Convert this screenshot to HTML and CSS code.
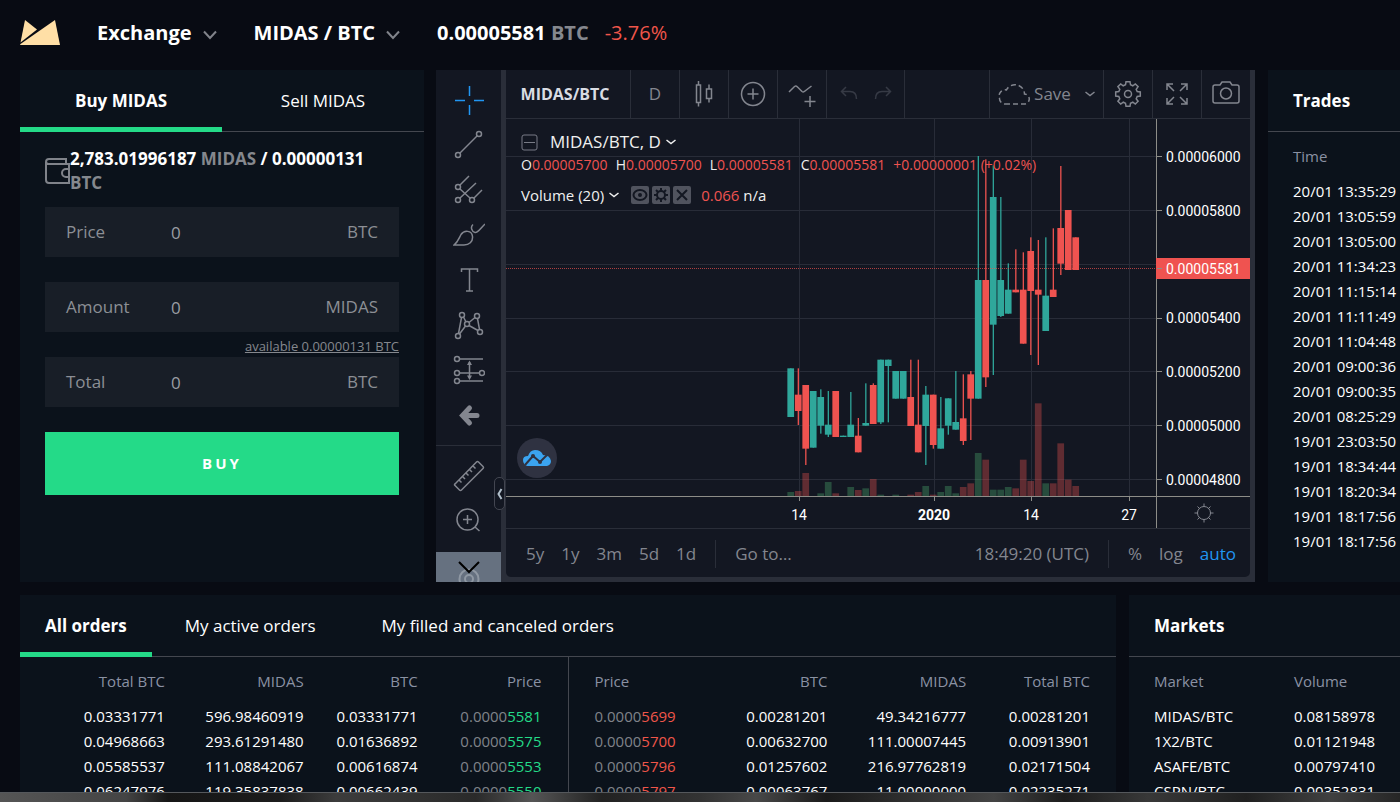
FILE: index.html
```html
<!DOCTYPE html>
<html lang="en">
<head>
    <meta charset="UTF-8">
    <meta name="viewport" content="width=device-width, initial-scale=1.0">
    <link rel="stylesheet" href="styles.css">
    <title>MIDAS / BTC Exchange</title>
</head>
<body>

    <header class="topbar">
        <svg class="logo" viewBox="0 0 40 26" width="40" height="26">
            <path d="M5 0 L17 9.5 L0.5 22.5 Z"/>
            <path d="M35 0 L40 25 H0 L0.5 24 Z"/>
        </svg>
        <button class="nav-button">Exchange
            <svg viewBox="0 0 14 10" width="14" height="10"><path d="M1 1.5 L7 8 L13 1.5"/></svg>
        </button>
        <button class="nav-button">MIDAS / BTC
            <svg viewBox="0 0 14 10" width="14" height="10"><path d="M1 1.5 L7 8 L13 1.5"/></svg>
        </button>
        <div class="ticker"><b>0.00005581 <span class="muted">BTC</span></b><span class="change">-3.76%</span></div>
    </header>

    <main class="top-row">
        <section class="panel trade-form">
            <div class="tabs form-tabs">
                <button class="tab active">Buy MIDAS</button>
                <button class="tab">Sell MIDAS</button>
            </div>
            <form class="form-body">
                <div class="wallet">
                    <svg viewBox="0 0 25 26" width="25" height="26">
                        <path d="M21 6 V1 H4 A3 3 0 0 0 1 4 V22 A3 3 0 0 0 4 25 H24 V6 H4 A3 3 0 0 1 1 4 M24 11 H21 A3.5 3.5 0 0 0 21 19 H24"/>
                    </svg>
                    <p>2,783.01996187 <span class="muted">MIDAS</span> / 0.00000131 <span class="muted">BTC</span></p>
                </div>
                <div class="field">
                    <label for="price">Price</label>
                    <input type="text" id="price" value="0">
                    <span>BTC</span>
                </div>
                <div class="field">
                    <label for="amount">Amount</label>
                    <input type="text" id="amount" value="0">
                    <span>MIDAS</span>
                </div>
                <a class="available" href="#">available 0.00000131 BTC</a>
                <div class="field">
                    <label for="total">Total</label>
                    <input type="text" id="total" value="0">
                    <span>BTC</span>
                </div>
                <button type="button" class="buy">BUY</button>
            </form>
        </section>

        <section class="chart">
            <div class="tools">
                <button class="tool selected" aria-label="Cross">
                    <svg viewBox="0 0 32 32"><path d="M2 16.5H12M21 16.5H31M16.5 2V12M16.5 21V31"/></svg>
                </button>
                <button class="tool" aria-label="Trend line">
                    <svg viewBox="0 0 32 32"><circle cx="5" cy="26" r="2.5"/><circle cx="26" cy="5" r="2.5"/><path d="M7 24L24 7"/></svg>
                </button>
                <button class="tool" aria-label="Pitchfork">
                    <svg viewBox="0 0 32 32"><circle cx="5" cy="13" r="2.5"/><circle cx="5" cy="26" r="2.5"/><circle cx="19" cy="26" r="2.5"/><path d="M7 11L16 2M7 15L17 24M7 24L23 9M21 24L29 16"/></svg>
                </button>
                <button class="tool" aria-label="Brush">
                    <svg viewBox="0 0 32 32"><path d="M1 26C5 23 6 19 8 15.500C11 11 19 11 19.500 17.500C20 23 16 26 11 26ZM20 5.500C17 8 19 13 22 13.500C25 14 26 11 32 5"/></svg>
                </button>
                <button class="tool" aria-label="Text">
                    <svg viewBox="0 0 32 32"><path d="M8.500 8V5H24.500V8M16.500 5V27M13 27H20"/></svg>
                </button>
                <button class="tool" aria-label="Pattern">
                    <svg viewBox="0 0 32 32"><circle cx="9" cy="6" r="2.500"/><circle cx="24" cy="7" r="2.500"/><circle cx="14" cy="15" r="2.500"/><circle cx="5" cy="27" r="2.500"/><circle cx="27" cy="23" r="2.500"/><path d="M8.500 8.500L5.500 24.500M10.500 8L13 13M16 13.500L22 8.500M24.500 9.500L26.500 20.500M12.500 17L6.500 25M16 16.500L25 21.500"/></svg>
                </button>
                <button class="tool" aria-label="Position">
                    <svg viewBox="0 0 32 32"><circle cx="4" cy="5" r="2.500"/><circle cx="4" cy="19" r="2.500"/><circle cx="29" cy="19" r="2.500"/><circle cx="4" cy="27" r="2.500"/><path d="M6.500 5H30M6.500 19H26.500M6.500 27H30M16.500 8V24"/><path class="solid" d="M16.500 6.500L19 11H14ZM16.500 26L19 21.500H14Z"/></svg>
                </button>
                <button class="tool" aria-label="Back">
                    <svg viewBox="0 0 32 32"><path class="thick" d="M16.500 9L9.500 16.500L16.500 24M10 16.500H24"/></svg>
                </button>
                <hr>
                <button class="tool" aria-label="Ruler">
                    <svg viewBox="0 0 32 32"><path d="M2 24L23.500 2Q24.500 1 25.500 2L30 6.500Q31 7.500 30 8.500L8.500 30Q7.500 31 6.500 30L2 25.500Q1 24.500 2 24ZM6 20L8.500 22.500M9.500 16.500L12 19M13 13L15.500 15.500M16.500 9.500L19 12M20 6L22.500 8.500"/></svg>
                </button>
                <button class="tool" aria-label="Zoom in">
                    <svg viewBox="0 0 32 32"><circle cx="14.500" cy="14.500" r="10.500"/><path d="M22 22L26.500 26M14.500 10V19M10 14.500H19"/></svg>
                </button>
                <button class="tool more" aria-label="More tools">
                    <svg viewBox="0 0 32 30"><g class="ghost"><circle cx="16" cy="27" r="9.500"/><circle cx="16" cy="27" r="4"/></g><path d="M6 10L16 20L26 10"/></svg>
                </button>
            </div>
            <button class="handle" aria-label="Hide tools">
                <svg viewBox="0 0 6 12" width="6" height="12"><path d="M4.500 1L1.500 6L4.500 11"/></svg>
            </button>

            <div class="chart-main">
                <div class="toolbar">
                    <button class="symbol">MIDAS/BTC</button>
                    <button class="cell">D</button>
                    <button class="cell" aria-label="Candles">
                        <svg viewBox="0 0 32 32" width="32" height="32"><path d="M8.500 7H12.500V24.500H8.500ZM10.500 3V7M10.500 24.500V28.500M18.500 11H23.500V20.500H18.500ZM21 6.500V11M21 20.500V24.500"/></svg>
                    </button>
                    <button class="cell" aria-label="Compare">
                        <svg viewBox="0 0 32 32" width="32" height="32"><circle cx="16" cy="16" r="11.500"/><path d="M16 10.500V21.500M10.500 16H21.500"/></svg>
                    </button>
                    <button class="cell" aria-label="Indicators">
                        <svg viewBox="0 0 32 32" width="32" height="32"><path d="M3 14L8.500 8.500Q10 7.500 11.500 9L16 13.500Q17.500 14.500 19 13L25.500 8M24 18V29M18.500 23.500H29.500"/></svg>
                    </button>
                    <div class="history">
                        <button aria-label="Undo"><svg viewBox="0 0 18 16" width="18" height="16"><path d="M6 1L1.500 5.500L6 10M2 5.500H10Q16.500 5.500 16.500 13"/></svg></button>
                        <button aria-label="Redo"><svg viewBox="0 0 18 16" width="18" height="16"><path d="M12 1L16.500 5.500L12 10M16 5.500H8Q1.500 5.500 1.500 13"/></svg></button>
                    </div>
                    <div class="spacer"></div>
                    <button class="save">
                        <svg viewBox="0 0 32 24" width="32" height="24"><path class="dashed" d="M7 22H26A5 5 0 0 0 26.500 12A9.500 9.500 0 0 0 8.500 8A6 6 0 0 0 1.500 16A5.500 5.500 0 0 0 7 22"/></svg>
                        Save
                        <svg class="caret" viewBox="0 0 10 6" width="10" height="6"><path d="M0.500 1L5 4.500L9.500 1"/></svg>
                    </button>
                    <button class="cell" aria-label="Settings">
                        <svg viewBox="0 0 32 32" width="32" height="32"><circle cx="16" cy="16" r="3.500"/><path id="cog"/></svg>
                    </button>
                    <button class="cell" aria-label="Full screen">
                        <svg viewBox="0 0 32 32" width="32" height="32"><path d="M6 12V6H12M6 6L13 13M20 6H26V12M26 6L19 13M6 20V26H12M6 26L13 19M20 26H26V20M26 26L19 19"/></svg>
                    </button>
                    <button class="cell" aria-label="Snapshot">
                        <svg viewBox="0 0 32 32" width="32" height="32"><path d="M5 7H10L12 4H20L22 7H27Q29 7 29 9V23Q29 25 27 25H5Q3 25 3 23V9Q3 7 5 7Z"/><circle cx="16" cy="15.500" r="5.500"/></svg>
                    </button>
                </div>

                <div class="plot-row">
                    <div class="plot">
                        <div class="legend">
                            <div class="legend-title">
                                <svg viewBox="0 0 17 17" width="17" height="17"><rect x="1" y="1" width="15" height="15" rx="2"/><path d="M3 8.500H14"/></svg>
                                <span>MIDAS/BTC, D</span>
                                <svg class="arrow" viewBox="0 0 10 6" width="10" height="6"><path d="M0.500 1L5 4.500L9.500 1"/></svg>
                            </div>
                            <div class="legend-prices">
                                <span>O<i>0.00005700</i></span>
                                <span>H<i>0.00005700</i></span>
                                <span>L<i>0.00005581</i></span>
                                <span>C<i>0.00005581</i></span>
                                <i>+0.00000001 (+0.02%)</i>
                            </div>
                            <div class="legend-volume">
                                <span>Volume (20)</span>
                                <svg class="arrow" viewBox="0 0 10 6" width="10" height="6"><path d="M0.500 1L5 4.500L9.500 1"/></svg>
                                <div class="chips">
                                    <button aria-label="Hide"><svg viewBox="0 0 18 18"><ellipse cx="9" cy="9" rx="6.500" ry="5"/><circle class="dot" cx="9" cy="9" r="1"/></svg></button>
                                    <button aria-label="Format"><svg viewBox="0 0 18 18"><circle cx="9" cy="9" r="4"/><path d="M9 2V5M9 13V16M2 9H5M13 9H16M4 4L6 6M12 12L14 14M14 4L12 6M4 14L6 12"/></svg></button>
                                    <button aria-label="Remove"><svg viewBox="0 0 18 18"><path d="M4 4L14 14M14 4L4 14"/></svg></button>
                                </div>
                                <span><i>0.066</i> n/a</span>
                            </div>
                        </div>
                        <svg id="plot" class="plot-svg" viewBox="0 0 650 377" preserveAspectRatio="xMaxYMid slice"></svg>
                        <div class="watermark">
                            <svg viewBox="0 0 28 18" width="28" height="18"><path class="cloud" d="M4 17Q0 15 0 11Q0 7 5 7Q7 1 12 1Q18 1 20 6Q27 6 28 12Q28 16 24 17Z"/><path d="M2 16L10 7L17 13L25 5"/><circle cx="10" cy="7" r="2"/><circle cx="17" cy="13" r="2"/></svg>
                        </div>
                    </div>
                    <svg class="price-axis" viewBox="0 0 94 377">
                        <path d="M0.500 0V377M1 37.500H6M1 91.500H6M1 199.500H6M1 252.500H6M1 306.500H6M1 360.500H6"/>
                        <text x="10" y="43">0.00006000</text>
                        <text x="10" y="97">0.00005800</text>
                        <text x="10" y="204">0.00005400</text>
                        <text x="10" y="258">0.00005200</text>
                        <text x="10" y="312">0.00005000</text>
                        <text x="10" y="366">0.00004800</text>
                        <rect x="0" y="139" width="94" height="21"/>
                        <path d="M1 149.500H6"/>
                        <text x="10" y="155">0.00005581</text>
                    </svg>
                </div>

                <div class="time-row">
                    <svg class="time-axis" viewBox="0 0 650 31" preserveAspectRatio="xMaxYMid slice">
                        <path d="M293.500 0V4M428.500 0V4M525.500 0V4M623.500 0V4"/>
                        <text x="293" y="23">14</text>
                        <text x="428" y="23" class="strong">2020</text>
                        <text x="525" y="23">14</text>
                        <text x="623" y="23">27</text>
                    </svg>
                    <button class="corner" aria-label="Scale settings">
                        <svg viewBox="0 0 20 20" width="20" height="20"><circle cx="10" cy="10" r="6.500"/><path d="M10 4V0.500M10 16V19.500M4 10H0.500M16 10H19.500M5.800 5.800L3.500 3.500M14.200 14.200L16.500 16.500M14.200 5.800L16.500 3.500M5.800 14.200L3.500 16.500"/></svg>
                    </button>
                </div>

                <div class="ranges">
                    <button>5y</button>
                    <button>1y</button>
                    <button>3m</button>
                    <button>5d</button>
                    <button>1d</button>
                    <span class="bar"></span>
                    <button>Go to…</button>
                    <span class="clock">18:49:20 (UTC)</span>
                    <span class="bar"></span>
                    <button>%</button>
                    <button>log</button>
                    <button class="auto">auto</button>
                </div>
            </div>
        </section>

        <section class="panel trades">
            <h2>Trades</h2>
            <table>
                <thead><tr><th>Time</th></tr></thead>
                <tbody>
                    <tr><td>20/01 13:35:29</td></tr>
                    <tr><td>20/01 13:05:59</td></tr>
                    <tr><td>20/01 13:05:00</td></tr>
                    <tr><td>20/01 11:34:23</td></tr>
                    <tr><td>20/01 11:15:14</td></tr>
                    <tr><td>20/01 11:11:49</td></tr>
                    <tr><td>20/01 11:04:48</td></tr>
                    <tr><td>20/01 09:00:36</td></tr>
                    <tr><td>20/01 09:00:35</td></tr>
                    <tr><td>20/01 08:25:29</td></tr>
                    <tr><td>19/01 23:03:50</td></tr>
                    <tr><td>19/01 18:34:44</td></tr>
                    <tr><td>19/01 18:20:34</td></tr>
                    <tr><td>19/01 18:17:56</td></tr>
                    <tr><td>19/01 18:17:56</td></tr>
                </tbody>
            </table>
        </section>
    </main>

    <div class="bottom-row">
        <section class="panel orders">
            <div class="tabs order-tabs">
                <button class="tab active">All orders</button>
                <button class="tab">My active orders</button>
                <button class="tab">My filled and canceled orders</button>
            </div>
            <div class="books">
                <div class="book">
                    <table class="bids">
                        <thead><tr><th>Total BTC</th><th>MIDAS</th><th>BTC</th><th>Price</th></tr></thead>
                        <tbody>
                            <tr><td>0.03331771</td><td>596.98460919</td><td>0.03331771</td><td class="price">0.0000<b>5581</b></td></tr>
                            <tr><td>0.04968663</td><td>293.61291480</td><td>0.01636892</td><td class="price">0.0000<b>5575</b></td></tr>
                            <tr><td>0.05585537</td><td>111.08842067</td><td>0.00616874</td><td class="price">0.0000<b>5553</b></td></tr>
                            <tr><td>0.06247976</td><td>119.35837838</td><td>0.00662439</td><td class="price">0.0000<b>5550</b></td></tr>
                        </tbody>
                    </table>
                </div>
                <div class="book">
                    <table class="asks">
                        <thead><tr><th>Price</th><th>BTC</th><th>MIDAS</th><th>Total BTC</th></tr></thead>
                        <tbody>
                            <tr><td class="price">0.0000<b>5699</b></td><td>0.00281201</td><td>49.34216777</td><td>0.00281201</td></tr>
                            <tr><td class="price">0.0000<b>5700</b></td><td>0.00632700</td><td>111.00007445</td><td>0.00913901</td></tr>
                            <tr><td class="price">0.0000<b>5796</b></td><td>0.01257602</td><td>216.97762819</td><td>0.02171504</td></tr>
                            <tr><td class="price">0.0000<b>5797</b></td><td>0.00063767</td><td>11.00000000</td><td>0.02235271</td></tr>
                        </tbody>
                    </table>
                </div>
            </div>
        </section>

        <section class="panel markets">
            <h2>Markets</h2>
            <table>
                <thead><tr><th>Market</th><th>Volume</th></tr></thead>
                <tbody>
                    <tr><td>MIDAS/BTC</td><td>0.08158978</td></tr>
                    <tr><td>1X2/BTC</td><td>0.01121948</td></tr>
                    <tr><td>ASAFE/BTC</td><td>0.00797410</td></tr>
                    <tr><td>CSPN/BTC</td><td>0.00352831</td></tr>
                </tbody>
            </table>
        </section>
    </div>

    <div class="desk"></div>

    <script src="script.js"></script>
</body>
</html>
```
FILE: styles.css
```css
* {
    box-sizing: border-box;
}

body {
    font-family: "Open Sans", "Noto Sans", sans-serif;
    font-size: 15px;
    line-height: 24px;
    margin: 0;
    height: 100vh;
    display: flex;
    flex-direction: column;
    overflow: hidden;
    color: #fff;
    background-color: #080b13;
}

button {
    font: inherit;
    color: inherit;
    background: none;
    border: none;
    padding: 0;
    cursor: pointer;
}

svg {
    display: block;
    fill: none;
    stroke: currentColor;
}

i {
    font-style: normal;
    color: #ef5350;
}

h2 {
    font-size: 17px;
    line-height: 61px;
    margin: 0;
    padding: 0 25px;
    border-bottom: 1px solid #44474f;
}

.muted {
    color: #85888e;
}

/* header */

.topbar {
    display: flex;
    align-items: center;
    height: 70px;
    flex: none;
    padding: 0 20px 4px;
    font-size: 20px;
}

.logo {
    fill: #ffdfa6;
    stroke: none;
    margin-right: 37px;
}

.nav-button {
    display: flex;
    align-items: center;
    gap: 11px;
    font-weight: bold;
    margin-right: 37px;
}

.nav-button svg {
    color: #80838a;
    stroke-width: 2;
    margin-top: 4px;
}

.change {
    color: #f0564a;
    margin-left: 16px;
}

/* panels */

.top-row {
    display: grid;
    grid-template-columns: 404px 1fr 132px;
    gap: 12px;
    height: 512px;
    flex: none;
    padding-left: 20px;
}

.bottom-row {
    display: grid;
    grid-template-columns: 1fr 271px;
    gap: 13px;
    flex: 1;
    min-height: 0;
    margin-top: 13px;
    padding-left: 20px;
}

.panel {
    background-color: #0b121b;
    overflow: hidden;
}

.tabs {
    display: flex;
    height: 62px;
    border-bottom: 1px solid #44474f;
    font-size: 17px;
}

.tab {
    height: 62px;
    border-bottom: 5px solid transparent;
    padding-top: 5px;
}

.tab.active {
    font-weight: bold;
    border-color: #24da88;
}

.form-tabs .tab {
    flex: 1;
}

.order-tabs .tab {
    padding-left: 33px;
    padding-right: 33px;
}

.order-tabs .tab.active {
    padding-left: 25px;
    padding-right: 25px;
}

/* order form */

.form-body {
    display: flex;
    flex-direction: column;
    padding: 15px 25px;
    font-size: 17px;
}

.wallet {
    display: flex;
    align-items: center;
    font-weight: bold;
    margin-bottom: 12px;
}

.wallet svg {
    flex: none;
    color: #80838a;
    stroke-width: 2;
}

.wallet p {
    margin: 0;
}

.field {
    display: flex;
    align-items: center;
    height: 50px;
    margin-bottom: 25px;
    padding: 0 21px;
    background-color: #181e27;
    color: #8c8f95;
}

.field label {
    width: 105px;
}

.field input {
    flex: 1;
    min-width: 0;
    font: inherit;
    color: #9a9da3;
    background: none;
    border: none;
    padding: 2px 0 0;
    outline: none;
}

.available {
    height: 25px;
    margin-top: -25px;
    padding-top: 2px;
    text-align: right;
    font-size: 13px;
    color: #85888e;
}

.buy {
    height: 63px;
    padding-bottom: 2px;
    background-color: #24da88;
    font-size: 15px;
    font-weight: bold;
    letter-spacing: 3px;
}

/* chart */

.chart {
    position: relative;
    display: flex;
    margin-right: 1px;
    color: #83868f;
    background-color: #2a2e39;
    min-width: 0;
}

.tools {
    display: flex;
    flex-direction: column;
    width: 65px;
    flex: none;
    padding-top: 7px;
    background-color: #131722;
}

.tool {
    height: 45px;
    flex: none;
    display: flex;
    justify-content: center;
    align-items: center;
}

.tool svg {
    width: 32px;
    stroke-width: 1.5;
}

.tool.selected {
    color: #2196f3;
}

.tools hr {
    width: 100%;
    margin: 8px 0 7px;
    border: none;
    border-top: 1px solid #2a2e39;
}

.tool .solid {
    fill: currentColor;
    stroke: none;
}

.tool .thick {
    stroke-width: 5;
    stroke-linecap: round;
}

.tool.more {
    flex: 1;
    margin-top: 9px;
    background-color: #667180;
    color: #000;
    align-items: flex-start;
    overflow: hidden;
}

.tool.more svg {
    stroke-width: 2;
}

.ghost {
    stroke: #8f98a3;
}

.handle {
    position: absolute;
    left: 58px;
    top: 407px;
    width: 11px;
    height: 33px;
    display: flex;
    align-items: center;
    justify-content: center;
    border: 1px solid #434651;
    border-radius: 5px;
    background-color: #131722;
    color: #b2c0cc;
}

.handle svg {
    flex: none;
    stroke-width: 2;
}

.chart-main {
    flex: 1;
    min-width: 0;
    display: flex;
    flex-direction: column;
    margin: 0 5px 5px;
    background-color: #131722;
    border-radius: 0 0 5px 5px;
}

.toolbar {
    display: flex;
    height: 49px;
    border-bottom: 1px solid #2a2e39;
    font-size: 17px;
}

.toolbar > * {
    display: flex;
    align-items: center;
    justify-content: center;
    border-right: 1px solid #2a2e39;
}

.toolbar > :last-child {
    width: 48px;
    border-right: none;
}

.symbol {
    width: 125px;
    padding-right: 6px;
    font-size: 16px;
    font-weight: bold;
    color: #d9dce3;
}

.cell {
    width: 49px;
}

.cell svg {
    stroke-width: 1.5;
}

.history {
    width: 78px;
    gap: 16px;
    color: #363a45;
}

.history svg,
.save svg {
    stroke-width: 1.5;
}

.spacer {
    flex: 1;
}

.save {
    width: 114px;
    gap: 4px;
}

.save .caret {
    margin-left: 10px;
}

.dashed {
    stroke-dasharray: 5 3;
}

.plot-row {
    display: flex;
    height: 378px;
    border-bottom: 1px solid #8d8d88;
}

.plot {
    position: relative;
    flex: 1;
    min-width: 0;
}

.plot-svg {
    position: relative;
    width: 100%;
    height: 377px;
}

.price-axis,
.corner {
    width: 94px;
    flex: none;
}

.grid {
    stroke: #282c38;
}

.last-price {
    stroke: #ef5350;
    stroke-dasharray: 1 1;
}

.up {
    fill: #2fa79b;
    stroke: none;
}

.down {
    fill: #ef5350;
    stroke: none;
}

.volume {
    opacity: 0.35;
}

.volume .up {
    fill: #4caf70;
}

.price-axis path,
.time-axis path {
    stroke: #8d8d88;
}

.price-axis text,
.time-axis text {
    font-family: Roboto, "Liberation Sans", sans-serif;
    font-size: 14px;
    fill: #fff;
    stroke: none;
}

.price-axis rect {
    fill: #ef5350;
    stroke: none;
}

.time-axis text {
    text-anchor: middle;
}

.time-axis .strong {
    font-weight: bold;
}

.legend {
    position: absolute;
    left: 15px;
    top: 11px;
    z-index: 1;
    color: #f0f0f0;
    white-space: nowrap;
}

.legend-title,
.legend-prices,
.legend-volume {
    display: flex;
    align-items: center;
}

.legend-title {
    font-size: 17px;
}

.legend-title > svg:first-child {
    color: #787b86;
    margin-right: 12px;
}

.legend .arrow {
    stroke-width: 1.5;
    margin-left: 5px;
}

.legend-prices {
    gap: 8px;
    font-size: 14px;
    line-height: 22px;
}

.legend-volume {
    margin-top: 7px;
}

.chips {
    display: flex;
    gap: 3px;
    margin: 0 10px 0 12px;
}

.chips button {
    border-radius: 2px;
    background-color: #50535e;
    color: #131722;
}

.chips svg {
    width: 18px;
    height: 18px;
    stroke-width: 2;
}

.dot {
    fill: currentColor;
}

.watermark {
    position: absolute;
    left: 11px;
    bottom: 18px;
    width: 40px;
    height: 40px;
    display: flex;
    align-items: center;
    justify-content: center;
    border-radius: 50%;
    background-color: #2f3241;
    color: #2f3241;
}

.watermark svg {
    stroke-width: 2;
}

.watermark circle {
    fill: currentColor;
    stroke: none;
}

.watermark .cloud {
    fill: #3ba4f0;
    stroke: none;
}

.time-row {
    display: flex;
    height: 32px;
    border-bottom: 1px solid #2a2e39;
}

.time-axis {
    flex: 1;
    min-width: 0;
    height: 31px;
}

.corner {
    display: flex;
    align-items: center;
    justify-content: center;
    border-left: 1px solid #8d8d88;
}

.ranges {
    flex: 1;
    display: flex;
    align-items: center;
    gap: 17px;
    padding: 1px 14px 0 20px;
    font-size: 17px;
}

.bar {
    width: 1px;
    height: 28px;
    margin: 0 2px;
    background-color: #2a2e39;
}

.clock {
    margin-left: auto;
}

.auto {
    color: #2196f3;
}

/* tables */

table {
    width: 100%;
    table-layout: fixed;
    border-collapse: collapse;
    white-space: nowrap;
}

th,
td {
    height: 25px;
    padding: 0;
    text-align: left;
    font-weight: normal;
}

th {
    height: 45px;
    color: #8a91a3;
}

.trades table,
.markets table {
    margin: 1px 0 0 25px;
}

.markets th:first-child {
    width: 140px;
}

.books {
    display: flex;
}

.book {
    flex: 1;
    padding: 1px 26px 0;
}

.book + .book {
    border-left: 1px solid #44474f;
}

.book th,
.book td {
    text-align: right;
}

.bids th:nth-child(1) {
    width: 24%;
}

.bids th:nth-child(2),
.asks th:nth-child(3) {
    width: 28%;
}

.bids th:nth-child(3) {
    width: 23%;
}

.asks th:nth-child(4) {
    width: 25%;
}

.asks th:nth-child(1) {
    width: 22%;
}

.asks th:first-child,
.asks td:first-child {
    text-align: left;
}

.price {
    color: #80838a;
}

.price b {
    font-weight: normal;
}

.bids .price b {
    color: #24da88;
}

.asks .price b {
    color: #f0564a;
}

/* strip under the page */

.desk {
    height: 10px;
    flex: none;
    border-top: 1px solid #55585c;
    background: linear-gradient(to right, #555 0, #444 9%, #161616 12%, #1c1c1c 20%, #3c3c3c 24%, #2a2a2a 34%, #555 38%, #222 43%, #333 50%, #484848 54%, #1a1a1a 59%, #333 66%, #444 71%, #1c1c1c 76%, #383838 82%, #202020 89%, #404040 95%, #262626 100%);
}
```
FILE: script.js
```js
const plot = document.getElementById('plot');

// [colour, high, open/close top, open/close bottom, low, volume], in thirds of a pixel
const candles = [
    ['g', 655, 655, 801, 801, 12], ['r', 655, 734, 783, 825, 15], ['r', 705, 705, 896, 945, 69],
    ['g', 723, 723, 893, 893, 0], ['g', 718, 741, 827, 851, 8], ['g', 723, 824, 854, 861, 42],
    ['r', 723, 723, 861, 861, 8], ['g', 857, 857, 861, 861, 0], ['g', 726, 824, 861, 861, 27],
    ['r', 804, 857, 907, 907, 18], ['g', 700, 819, 827, 827, 23], ['r', 700, 705, 822, 822, 51],
    ['g', 629, 629, 817, 822, 4], ['g', 629, 629, 648, 817, 0], ['g', 663, 663, 746, 746, 4],
    ['g', 663, 663, 746, 746, 0], ['r', 629, 741, 828, 828, 4], ['r', 629, 824, 907, 907, 12],
    ['g', 708, 734, 828, 945, 30], ['r', 734, 734, 885, 896, 4], ['g', 741, 835, 896, 896, 12],
    ['g', 745, 745, 827, 854, 30], ['g', 663, 816, 839, 839, 8], ['r', 673, 805, 873, 885, 27],
    ['r', 663, 673, 746, 870, 38], ['g', 18, 390, 746, 746, 129], ['r', 28, 390, 682, 711, 109],
    ['g', 46, 141, 524, 675, 19], ['g', 141, 390, 498, 501, 19], ['g', 340, 419, 491, 491, 27],
    ['r', 298, 419, 427, 427, 23], ['r', 307, 419, 581, 581, 109], ['r', 262, 303, 423, 615, 45],
    ['r', 270, 419, 434, 645, 278], ['g', 262, 437, 543, 543, 38], ['r', 235, 419, 441, 441, 38],
    ['r', 48, 234, 341, 375, 158], ['r', 180, 180, 360, 360, 49], ['r', 262, 262, 360, 360, 30]
];

function rect(x, y, width, height, name) {
    return `<rect x="${x}" y="${y}" width="${width}" height="${height}" class="${name}"/>`;
}

let grid = '';
[37.5, 91.5, 145.5, 199.5, 252.5, 306.5, 360.5].forEach(y => grid += `M0 ${y}H650`);
[293.5, 428.5, 525.5, 623.5].forEach(x => grid += `M${x} 0V377`);

let volumes = '';
let bodies = '';

candles.forEach(([colour, high, top, bottom, low, volume], i) => {
    const x = 284.67 + i * 7.5;
    const name = colour === 'g' ? 'up' : 'down';
    volumes += rect(x - 3.3, 377 - volume / 3, 6.7, volume / 3, name);
    bodies += rect(x - 0.5, 31 + high / 3, 1.3, (low - high) / 3, name);
    bodies += rect(x - 3.3, 31 + top / 3, 6.7, (bottom - top) / 3, name);
});

plot.innerHTML = `<path class="grid" d="${grid}"/><g class="volume">${volumes}</g>${bodies}
    <path class="last-price" d="M0 149.5H650" opacity="0.7"/>`;

// settings cog outline with eight teeth
let cog = '';
for (let i = 0; i < 8; i++) {
    [[-15, 9.5], [-9, 12.5], [9, 12.5], [15, 9.5]].forEach(([offset, radius]) => {
        const angle = (i * 45 + offset) * Math.PI / 180;
        const x = 16 + radius * Math.sin(angle);
        const y = 16 - radius * Math.cos(angle);
        cog += `${cog ? 'L' : 'M'}${x.toFixed(1)} ${y.toFixed(1)}`;
    });
}
document.getElementById('cog').setAttribute('d', cog + 'Z');
```
